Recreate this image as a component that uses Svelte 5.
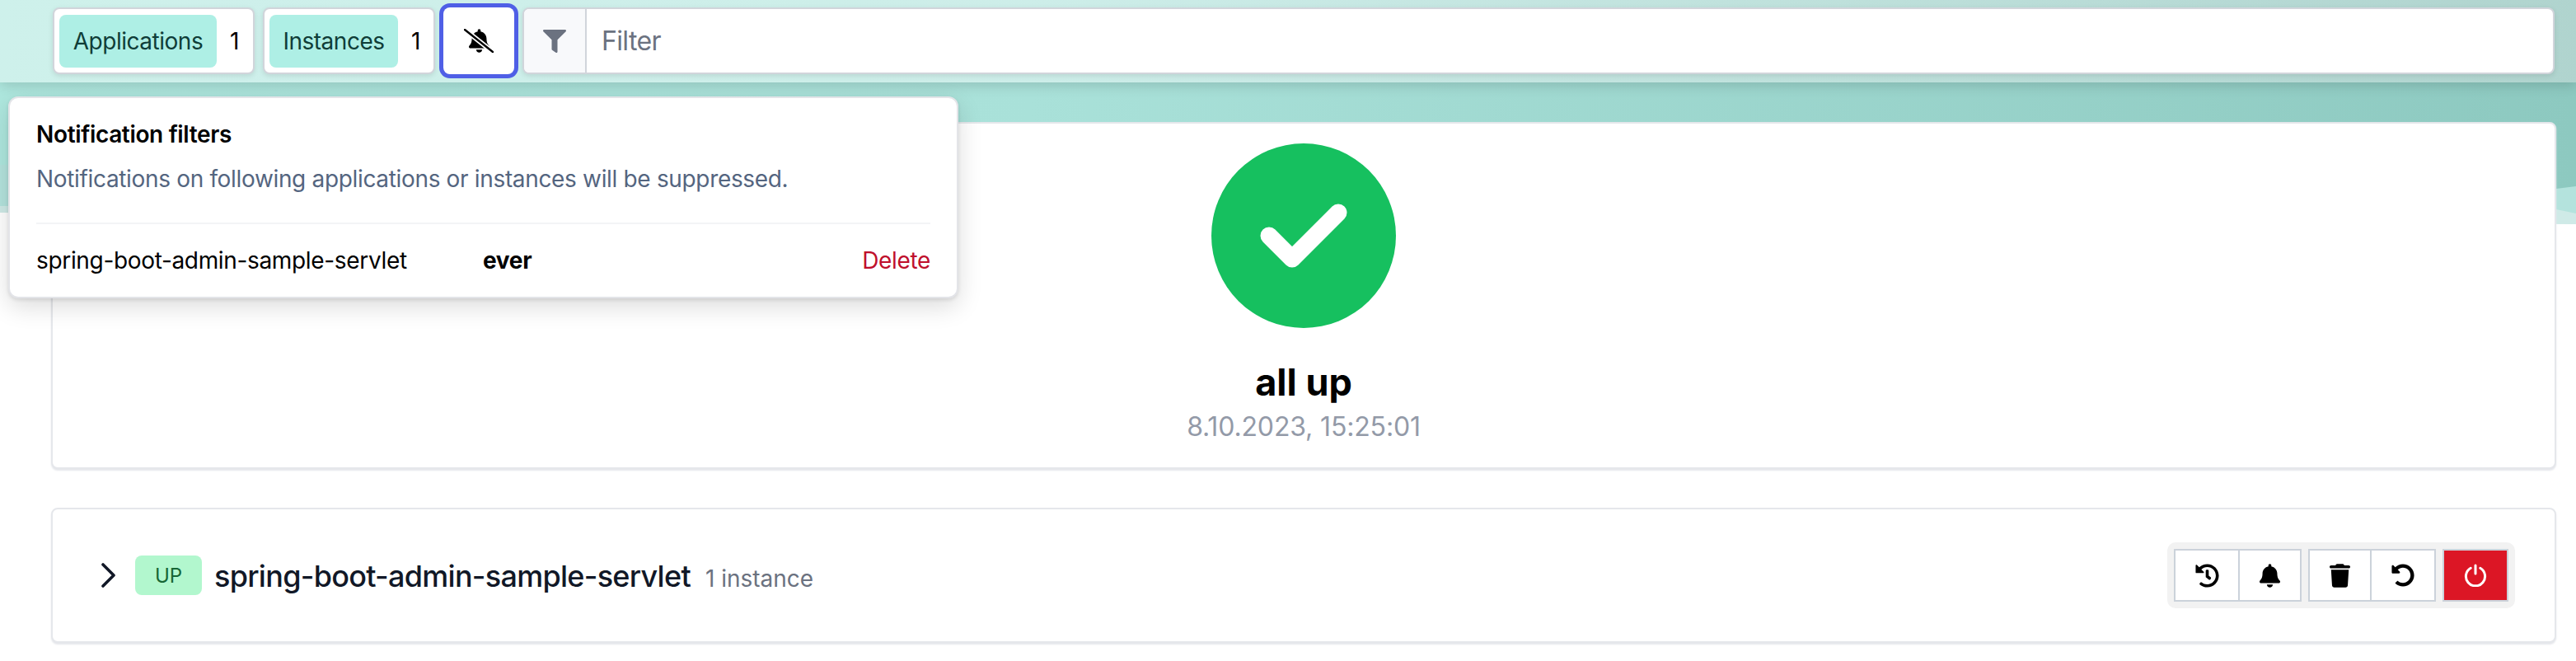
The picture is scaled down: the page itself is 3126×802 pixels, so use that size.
<script>
  const bellPath = 'M224 512c35.32 0 63.97-28.65 63.97-64H160.03c0 35.35 28.65 64 63.97 64zm215.39-149.71c-19.32-20.76-55.47-51.99-55.47-154.29 0-77.7-54.48-139.9-127.94-155.16V32c0-17.67-14.32-32-31.98-32s-31.98 14.33-31.98 32v20.84C118.56 68.1 64.08 130.3 64.08 208c0 102.3-36.15 133.53-55.47 154.29-6 6.45-8.66 14.16-8.61 21.71.11 16.4 12.98 32 32.1 32h383.8c19.12 0 32-15.6 32.1-32 .05-7.55-2.61-15.27-8.61-21.71z'

  let filter = ''
</script>

<div class="page">
  <svg class="hero" viewBox="0 0 3126 272" preserveAspectRatio="none" aria-hidden="true">
    <defs>
      <linearGradient id="top" x1="0" x2="1" y1="0" y2="0">
        <stop offset="0" stop-color="#aee7de" />
        <stop offset="0.4" stop-color="#a9e1d9" />
        <stop offset="1" stop-color="#8dc9c0" />
      </linearGradient>
    </defs>
    <polygon points="0,0 3126,0 3126,272 1800,268 0,258" fill="#cfeae7" />
    <polygon points="0,0 3126,0 3126,259 3102,254 1500,240 0,250" fill="#b4e3dd" />
    <polygon points="0,0 3126,0 3126,226 3102,229 1500,210 0,200" fill="url(#top)" />
  </svg>

  <nav class="toolbar">
    <div class="pill apps">
      <span class="tag">Applications</span>
      <span class="count">1</span>
    </div>
    <div class="pill insts">
      <span class="tag">Instances</span>
      <span class="count">1</span>
    </div>
    <button class="mute" aria-label="Notification filters">
      <svg viewBox="0 0 36 29" width="36" height="29">
        <svg x="6" y="0" width="25" height="29" viewBox="0 0 448 512"><path d={bellPath} /></svg>
        <line x1="1" y1="1" x2="35" y2="28" stroke="#fff" stroke-width="6" />
        <line x1="1" y1="1" x2="35" y2="28" stroke="#000" stroke-width="2.4" stroke-linecap="round" />
      </svg>
    </button>
    <div class="search">
      <span class="addon">
        <svg viewBox="0 0 512 512" width="28" height="28"><path d="M487.976 0H24.028C2.71 0-8.047 25.866 7.058 40.971L192 225.941V432c0 7.831 3.821 15.17 10.237 19.662l80 55.98C298.02 518.69 320 507.493 320 487.98V225.941l184.947-184.97C520.021 25.896 509.338 0 487.976 0z" /></svg>
      </span>
      <input bind:value={filter} placeholder="Filter" />
    </div>
  </nav>

  <main>
    <section class="card summary">
      <div class="ok">
        <svg viewBox="0 0 224 224" width="224" height="224">
          <polyline points="70,112 98,140 154,84" fill="none" stroke="#fff" stroke-width="21" stroke-linecap="round" stroke-linejoin="round" />
        </svg>
      </div>
      <h2>all up</h2>
      <p>8.10.2023, 15:25:01</p>
    </section>

    <section class="card app">
      <svg class="chevron" viewBox="0 0 20 30" width="20" height="30">
        <polyline points="3,2 16,15 3,28" fill="none" stroke="#111827" stroke-width="3.6" stroke-linecap="round" stroke-linejoin="round" />
      </svg>
      <span class="status">UP</span>
      <span class="name">spring-boot-admin-sample-servlet</span>
      <span class="instances">1 instance</span>

      <div class="actions">
        <div class="group">
          <button class="wide" aria-label="Journal">
            <svg viewBox="0 0 512 512" width="29" height="29"><path d="M504 255.531c.253 136.64-111.18 248.372-247.82 248.468-59.015.042-113.223-20.53-155.822-54.911-11.077-8.94-11.905-25.541-1.839-35.607l11.267-11.267c8.609-8.609 22.353-9.551 31.891-1.984C173.062 425.135 212.781 440 256 440c101.705 0 184-82.311 184-184 0-101.705-82.311-184-184-184-48.814 0-93.149 18.969-126.068 49.932l50.754 50.754c10.08 10.08 2.941 27.314-11.313 27.314H24c-8.837 0-16-7.163-16-16V38.627c0-14.254 17.234-21.393 27.314-11.314l49.372 49.372C129.209 34.136 189.552 8 256 8c136.81 0 247.747 110.78 248 247.531zm-180.912 78.784l9.823-12.63c8.138-10.463 6.253-25.542-4.21-33.679L288 256.349V152c0-13.255-10.745-24-24-24h-16c-13.255 0-24 10.745-24 24v135.651l65.409 50.874c10.463 8.137 25.541 6.253 33.679-4.21z" /></svg>
          </button>
          <button class="narrow" aria-label="Notifications">
            <svg viewBox="0 0 448 512" width="25" height="29"><path d={bellPath} /></svg>
          </button>
        </div>
        <div class="group">
          <button class="narrow" aria-label="Unregister">
            <svg viewBox="0 0 448 512" width="25" height="29"><path d="M135.2 17.7L128 32H32C14.3 32 0 46.3 0 64S14.3 96 32 96H416c17.7 0 32-14.3 32-32s-14.3-32-32-32H320l-7.2-14.3C307.4 6.8 296.3 0 284.2 0H163.8c-12.1 0-23.2 6.8-28.6 17.7zM416 128H32L53.2 467c1.6 25.3 22.6 45 47.9 45H346.9c25.3 0 46.3-19.7 47.9-45L416 128z" /></svg>
          </button>
          <button class="wide" aria-label="Restart">
            <svg viewBox="0 0 512 512" width="28" height="28"><path d="M255.545 8c-66.269.119-126.438 26.233-170.86 68.685L48.971 40.971C33.851 25.851 8 36.559 8 57.941V192c0 13.255 10.745 24 24 24h134.059c21.382 0 32.09-25.851 16.971-40.971l-41.75-41.75c30.864-28.899 70.801-44.907 113.23-45.273 92.398-.798 170.283 73.977 169.484 169.442C423.236 348.009 349.816 424 256 424c-41.127 0-79.997-14.678-110.63-41.556-4.743-4.161-11.906-3.908-16.368.553L89.34 422.659c-4.872 4.872-4.631 12.815.482 17.433C133.798 479.813 192.074 504 256 504c136.966 0 247.999-111.033 248-247.998C504.001 119.193 392.354 7.755 255.545 8z" /></svg>
          </button>
        </div>
        <div class="group">
          <button class="shutdown" aria-label="Shutdown">
            <svg viewBox="0 0 28 28" width="28" height="28" fill="none" stroke="#fff" stroke-width="3" stroke-linecap="round">
              <path d="M8.2 5.2a11.6 11.6 0 1 0 11.6 0" />
              <line x1="14" y1="2" x2="14" y2="12" />
            </svg>
          </button>
        </div>
      </div>
    </section>
  </main>

  <div class="popover">
    <h3>Notification filters</h3>
    <p>Notifications on following applications or instances will be suppressed.</p>
    <div class="row">
      <span class="target">spring-boot-admin-sample-servlet</span>
      <strong>ever</strong>
      <span class="delete">Delete</span>
    </div>
  </div>
</div>

<style>
  :global(body) {
    margin: 0;
    background: #fff;
    font-family: Inter, "Liberation Sans", sans-serif;
  }
  .page {
    position: relative;
    width: 3126px;
    height: 802px;
    overflow: hidden;
    background: #fff;
  }
  .hero {
    position: absolute;
    left: 0;
    top: 0;
    width: 3126px;
    height: 272px;
  }
  .toolbar {
    position: relative;
    box-sizing: border-box;
    height: 100px;
    padding: 9px 26px 10px 64px;
    display: flex;
    gap: 10px;
    background: linear-gradient(90deg, rgba(255,255,255,0.4), rgba(255,255,255,0.42) 40%, rgba(228,228,228,0.4));
    box-shadow: 0 4px 14px rgba(0,0,0,0.14);
  }
  .pill {
    box-sizing: border-box;
    flex: none;
    display: flex;
    align-items: center;
    height: 81px;
    padding: 0 6px;
    background: #fff;
    border: 2px solid #d1d5db;
    border-radius: 8px;
    box-shadow: 0 2px 6px rgba(0,0,0,0.1);
    font-size: 28px;
    letter-spacing: -0.017em;
  }
  .pill.apps { width: 245px; }
  .pill.insts { width: 209px; }
  .tag {
    display: flex;
    align-items: center;
    justify-content: center;
    height: 64px;
    background: #aeefe5;
    color: #0f3d38;
    border-radius: 8px;
  }
  .apps .tag { width: 191px; }
  .insts .tag { width: 156px; }
  .count {
    margin-left: 16px;
    color: #000;
  }
  .mute {
    flex: none;
    width: 86px;
    height: 81px;
    padding: 0;
    display: flex;
    align-items: center;
    justify-content: center;
    background: #fff;
    border: none;
    border-radius: 8px;
    box-shadow: 0 0 0 5px #4f5fe6;
  }
  .search {
    flex: 1;
    box-sizing: border-box;
    display: flex;
    height: 81px;
    background: #fff;
    border: 2px solid #d1d5db;
    border-radius: 8px;
    box-shadow: 0 2px 6px rgba(0,0,0,0.1);
    overflow: hidden;
  }
  .addon {
    width: 74px;
    display: flex;
    align-items: center;
    justify-content: center;
    background: #f8f9fb;
    border-right: 2px solid #d1d5db;
    fill: #6b7280;
  }
  .search input {
    flex: 1;
    border: none;
    outline: none;
    padding: 0 18px;
    background: transparent;
    font-family: inherit;
    font-size: 32px;
    letter-spacing: -0.02em;
  }
  .search input::placeholder { color: #6b7280; opacity: 1; }
  main {
    position: relative;
    padding: 48px 24px 0 62px;
    display: flex;
    flex-direction: column;
    gap: 47px;
  }
  .card {
    box-sizing: border-box;
    background: #fff;
    border: 2px solid #e5e7eb;
    border-radius: 8px;
    box-shadow: 0 2px 2px #e5e7eb;
  }
  .summary {
    height: 421px;
    padding-top: 24px;
    display: flex;
    flex-direction: column;
    align-items: center;
  }
  .ok {
    width: 224px;
    height: 224px;
    border-radius: 50%;
    background: #16c05f;
  }
  .ok svg { display: block; }
  .summary h2 {
    margin: 40px 0 0;
    font-size: 45px;
    line-height: 52px;
    font-weight: 700;
    color: #000;
  }
  .summary p {
    margin: 8px 0 0;
    font-size: 32px;
    line-height: 40px;
    letter-spacing: -0.005em;
    color: #939aa8;
  }
  .app {
    height: 164px;
    padding: 0 48px 0 58px;
    display: flex;
    align-items: center;
  }
  .chevron { flex: none; margin-right: 22px; }
  .status {
    width: 81px;
    height: 48px;
    display: flex;
    align-items: center;
    justify-content: center;
    background: #b2f7ce;
    color: #166534;
    border-radius: 8px;
    font-size: 24px;
  }
  .name {
    margin: 2px 0 0 15px;
    font-size: 36px;
    font-weight: 500;
    letter-spacing: -0.02em;
    color: #111827;
  }
  .instances {
    margin: 8px 0 0 18px;
    font-size: 28px;
    color: #6b7280;
  }
  .actions {
    margin-left: auto;
    display: flex;
    gap: 8px;
    padding: 8px;
    background: #f2f2f2;
    border-radius: 10px;
  }
  .group { display: flex; }
  .group button {
    box-sizing: border-box;
    height: 64px;
    padding: 0;
    display: flex;
    align-items: center;
    justify-content: center;
    background: #fff;
    border: 2px solid #cbd2da;
  }
  .group button + button { margin-left: -2px; }
  .wide { width: 80px; }
  .narrow { width: 77px; }
  .group .shutdown { width: 80px; background: #dc1625; }
  .popover {
    position: absolute;
    left: 10px;
    top: 117px;
    box-sizing: border-box;
    width: 1153px;
    height: 245px;
    padding: 28px 32px;
    background: #fff;
    border: 2px solid #e3e4e8;
    border-radius: 12px;
    box-shadow: 0 10px 30px rgba(0,0,0,0.14), 0 2px 4px rgba(0,0,0,0.1);
    font-size: 28px;
    letter-spacing: -0.012em;
  }
  .popover h3 {
    margin: 0;
    font-size: 28px;
    line-height: 32px;
    font-weight: 600;
    color: #000;
  }
  .popover p {
    margin: 22px 0 0;
    line-height: 32px;
    color: #54657f;
  }
  .row {
    margin-top: 37px;
    padding-top: 28px;
    border-top: 2px solid #f3f4f6;
    display: flex;
    line-height: 32px;
  }
  .target { width: 542px; color: #000; }
  .row strong { font-weight: 700; color: #000; }
  .delete { margin-left: auto; color: #bf0f2c; }
</style>
